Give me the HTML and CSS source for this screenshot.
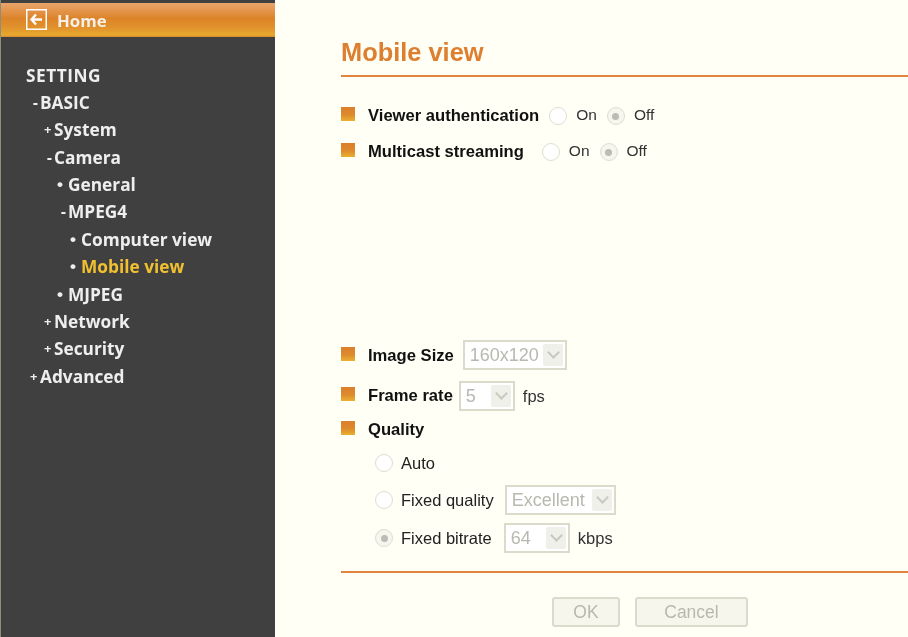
FILE: index.html
```html
<!DOCTYPE html>
<html lang="en">
<head>
<meta charset="utf-8">
<title>Mobile view</title>
<link rel="stylesheet" href="styles.css">
</head>
<body>
<div class="page">
  <nav class="side">
    <a class="home">
      <svg class="home-icon" width="21" height="21" viewBox="0 0 21 21"><rect x="0.75" y="0.75" width="19.5" height="19.5" fill="none" stroke="#fff" stroke-width="1.5"/><path d="M10 5.5 L5.5 10.5 L10 15.5 M6 10.5 H16" fill="none" stroke="#fff" stroke-width="2.4"/></svg>
      <span>Home</span>
    </a>
    <ul class="tree">
      <li class="l0">SETTING</li>
      <li class="l1"><i class="dash">-</i>BASIC</li>
      <li class="l2"><i>+</i>System</li>
      <li class="l2"><i class="dash">-</i>Camera</li>
      <li class="l3"><i class="dot">•</i>General</li>
      <li class="l3"><i class="dash">-</i>MPEG4</li>
      <li class="l4"><i class="dot">•</i>Computer view</li>
      <li class="l4 active"><i class="dot">•</i>Mobile view</li>
      <li class="l3"><i class="dot">•</i>MJPEG</li>
      <li class="l2"><i>+</i>Network</li>
      <li class="l2"><i>+</i>Security</li>
      <li class="l1"><i>+</i>Advanced</li>
    </ul>
  </nav>
  <main class="main">
    <h1 class="title">Mobile view</h1>
    <div class="row r-viewer"><b class="mark"></b><strong class="w-viewer">Viewer authentication</strong><span class="radio"></span><span class="opt">On</span><span class="radio on"></span><span class="opt">Off</span></div>
    <div class="row r-multi"><b class="mark"></b><strong class="w-multi">Multicast streaming</strong><span class="radio"></span><span class="opt">On</span><span class="radio on"></span><span class="opt">Off</span></div>
    <div class="row r-size"><b class="mark"></b><strong>Image Size</strong><span class="select s-size"><span>160x120</span><em></em></span></div>
    <div class="row r-rate"><b class="mark"></b><strong>Frame rate</strong><span class="select s-rate"><span>5</span><em></em></span><span class="unit">fps</span></div>
    <div class="row r-quality"><b class="mark"></b><strong>Quality</strong></div>
    <div class="row sub r-auto"><span class="radio"></span><span class="sub-label">Auto</span></div>
    <div class="row sub r-fixed"><span class="radio"></span><span class="sub-label">Fixed quality</span><span class="select s-exc"><span>Excellent</span><em></em></span></div>
    <div class="row sub r-bit"><span class="radio on"></span><span class="sub-label">Fixed bitrate</span><span class="select s-bit"><span>64</span><em></em></span><span class="unit">kbps</span></div>
    <div class="actions">
      <span class="btn b-ok">OK</span>
      <span class="btn b-cancel">Cancel</span>
    </div>
  </main>
</div>
</body>
</html>
```
FILE: styles.css
```css
* { box-sizing: border-box; }
html, body { margin: 0; height: 100%; }
body { background: #fffff5; font-family: "Liberation Sans", Arial, sans-serif; color: #111; overflow: hidden; }
.page { display: flex; height: 637px; width: 908px; filter: blur(0.35px); }

.side { width: 275px; flex: none; background: #404040; border-left: 1px solid #8d8d78; padding-top: 3px; }
.home { display: flex; align-items: center; gap: 10px; height: 34px; padding: 0 0 0 25px; color: #f6f0e8; font: bold 16.8px "Open Sans", sans-serif; background: linear-gradient(#e9a56c 0, #dd8429 45%, #e0902c 70%, #e8a82e 94%, #d98a30 100%); }
.home-icon { flex: none; margin-top: -1px; }
.tree { list-style: none; margin: 24.5px 0 0; padding: 0; color: #eeeeee; font: bold 17.3px/27.4px "Open Sans", sans-serif; }
.tree li { display: flex; height: 27.4px; white-space: nowrap; }
.tree i { font-style: normal; font-weight: bold; width: 11px; flex: none; padding-left: 1px; font-size: 13px; text-align: left; }
.tree .dash { font: bold 16px/27.4px "Liberation Sans", sans-serif; text-align: right; padding: 0 2px 0 0; }
.tree .dot { font: bold 17px/27.4px "Liberation Sans", sans-serif; padding: 0; }
.l0 { padding-left: 25px; letter-spacing: 0.5px; }
.l1 { padding-left: 28px; }
.l2 { padding-left: 42px; }
.l3 { padding-left: 56px; }
.l4 { padding-left: 69px; }
.tree .active { color: #f0c030; }
.tree .active i { color: #eee; }

.main { flex: 1; padding: 36px 0 0 66px; }
.title { margin: 0; height: 41px; line-height: 32px; font-size: 25.4px; font-weight: bold; color: #de7f30; border-bottom: 2px solid #e2853c; }
.row { display: flex; align-items: center; font-size: 16.5px; white-space: nowrap; }
.mark { width: 14px; height: 14px; flex: none; margin: -4px 13px 0 0; background: linear-gradient(#dc7f2c, #dd8a2c 55%, #eab030); }
.row strong { font-weight: bold; font-size: 16.6px; color: #111; }
.radio { width: 18px; height: 18px; flex: none; border-radius: 50%; border: 1px solid #dcdcd0; background: #fff; position: relative; }
.radio.on { background: #f6f6ee; }
.radio.on::after { content: ""; position: absolute; left: 4.5px; top: 4.5px; width: 7px; height: 7px; border-radius: 50%; background: #bcbcb4; }
.opt { color: #333; font-size: 15.5px; margin: -2px 10px 0 9px; }
.r-viewer { height: 36px; margin-top: 21px; }
.r-multi { height: 36px; }
.w-viewer { margin-right: 10px; }
.w-multi { margin-right: 18px; }
.r-size { height: 36px; margin-top: 168px; }
.r-rate { height: 36px; margin-top: 4px; }
.r-quality { height: 32px; }
.sub { padding-left: 34px; }
.sub-label { margin-left: 8px; color: #222; }
.r-auto { height: 34px; }
.r-fixed { height: 38px; margin-top: 1px; }
.r-bit { height: 38px; }

.select { display: flex; align-items: stretch; height: 30px; padding: 2px; border: 2px solid #dcdaca; background: #fff; color: #b8b8b0; margin-left: 9px; font-size: 18px; }
.select span { flex: 1; padding-left: 3px; line-height: 22px; overflow: hidden; }
.select em { width: 20px; flex: none; background: #f0f0ea; border-radius: 2px; position: relative; }
.select em::after { content: ""; position: absolute; left: 6.5px; top: 4px; width: 7px; height: 7px; border-right: 2px solid #c8c8c0; border-bottom: 2px solid #c8c8c0; transform: rotate(45deg); }
.s-size { width: 104px; margin-top: -2px; }
.s-rate { width: 56px; margin-left: 6px; }
.s-exc { width: 111px; margin-left: 11px; }
.s-bit { width: 66px; margin-left: 12px; }
.unit { margin-left: 8px; color: #333; }

.actions { margin-top: 14px; padding: 24px 0 0 211px; border-top: 2px solid #e2853c; display: flex; gap: 15px; }
.btn { height: 30px; line-height: 26px; text-align: center; font-size: 17.5px; color: #b8b8ae; background: #f6f6ec; border: 2px solid #dcdaca; border-radius: 3px; }
.b-ok { width: 68px; }
.b-cancel { width: 113px; }
```
